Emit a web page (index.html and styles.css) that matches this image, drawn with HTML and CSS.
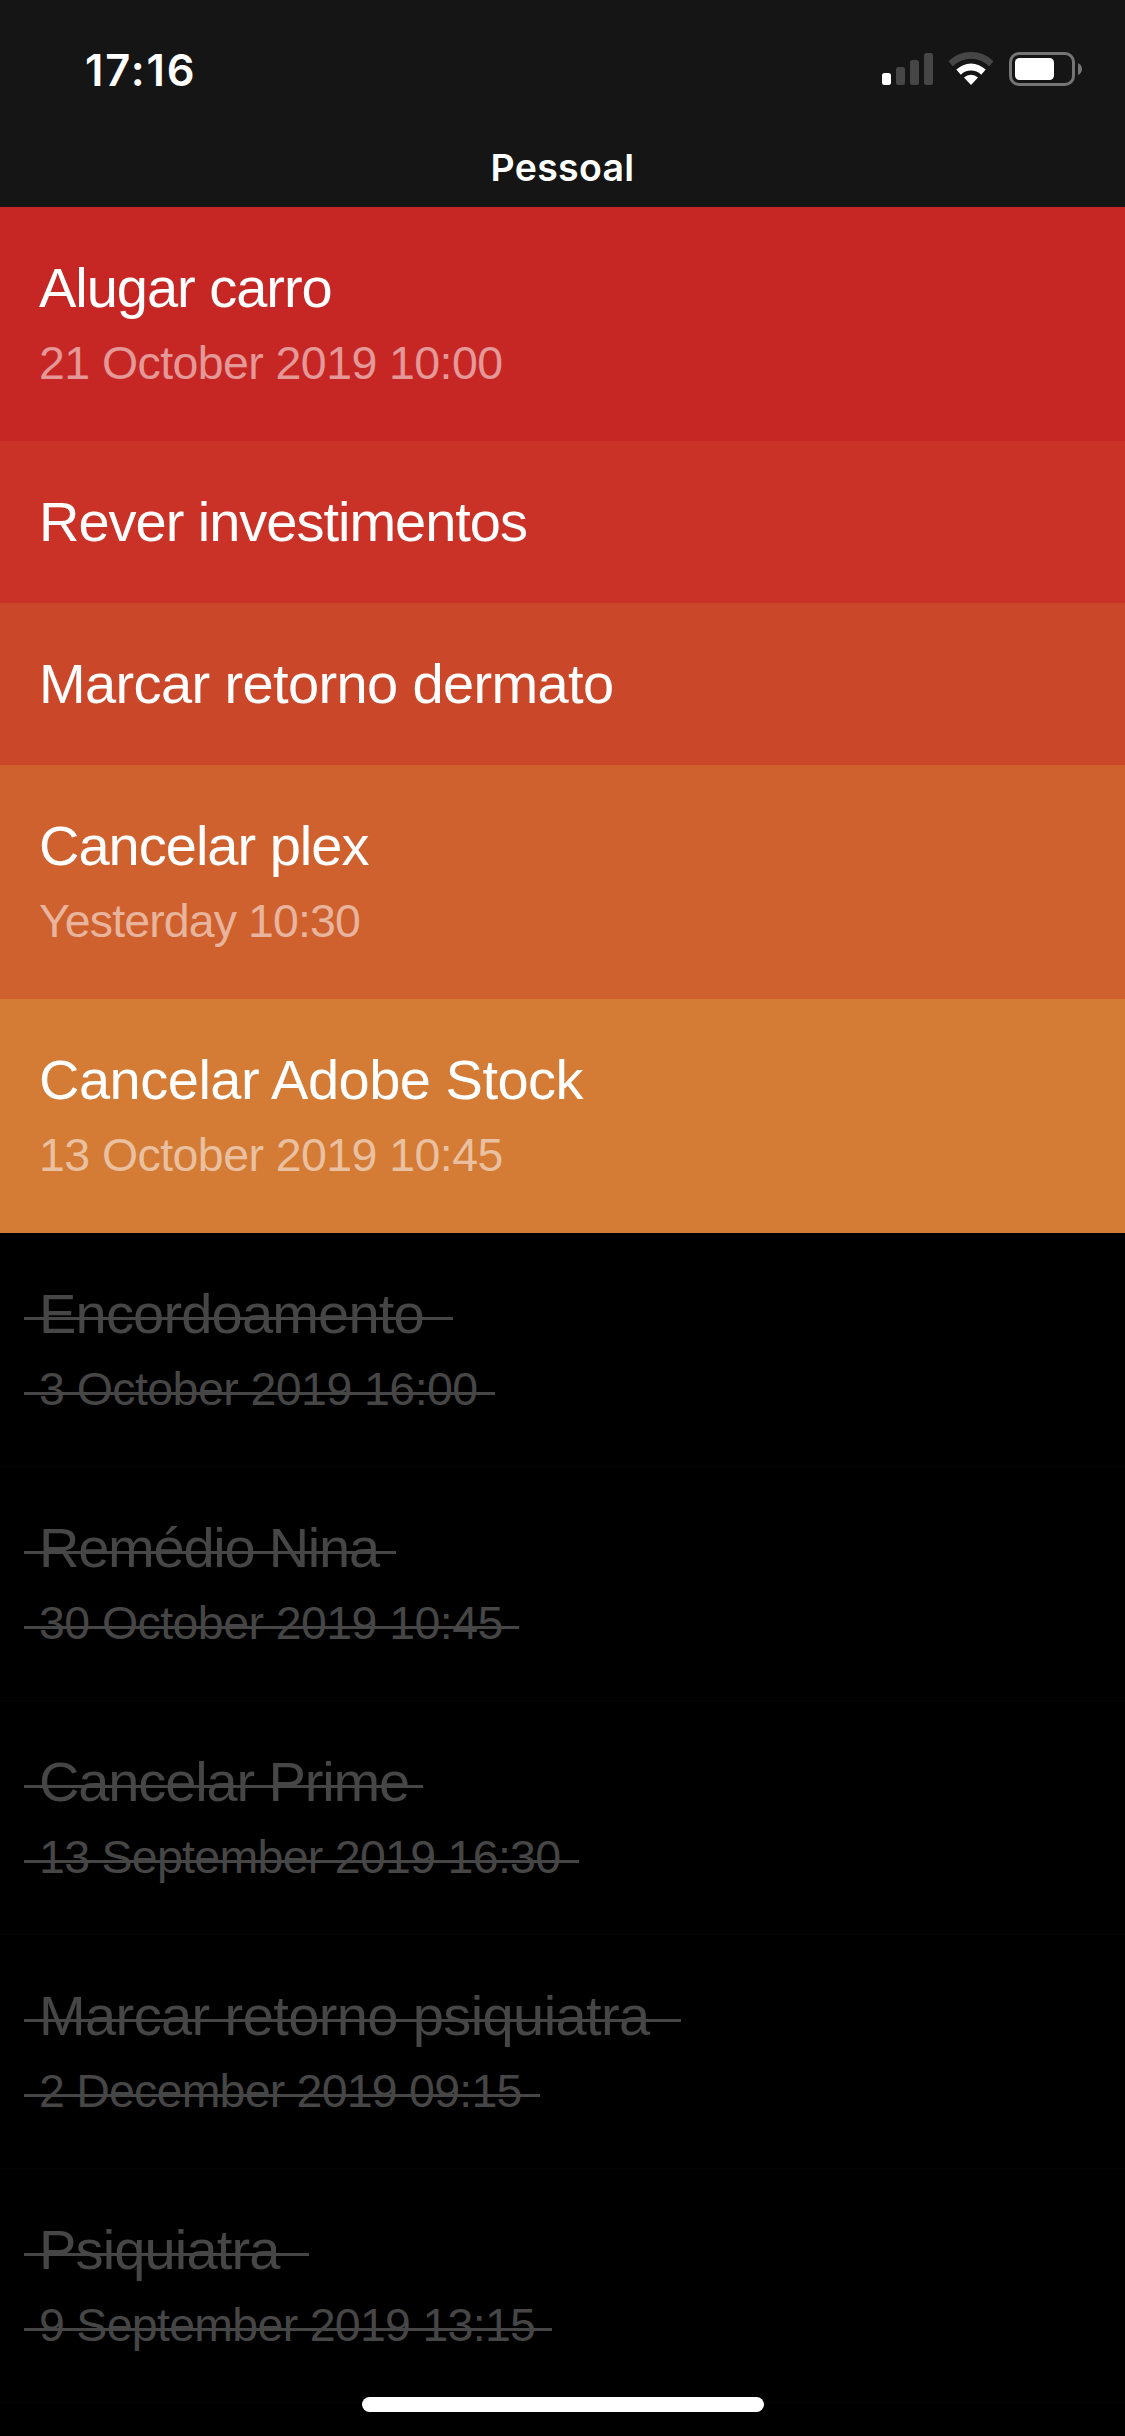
FILE: index.html
```
<!DOCTYPE html>
<html lang="pt">
<head>
<meta charset="utf-8">
<title>Pessoal</title>
<link rel="stylesheet" href="styles.css">
</head>
<body>
<div class="screen">
  <header class="header">
    <div class="status">
      <span class="time">17:16</span>
      <svg class="status-icons" width="210" height="40" viewBox="0 0 210 40" aria-hidden="true">
        <rect x="2" y="23" width="9" height="12" rx="2.5" fill="#fff"/>
        <g fill="#464646">
          <rect x="16" y="17" width="9" height="18" rx="2.5"/>
          <rect x="30" y="10" width="9" height="25" rx="2.5"/>
          <rect x="44" y="3" width="9" height="32" rx="2.5"/>
        </g>
        <path d="M68.500 11.200A32 32 0 0 1 113.500 11.200L109.200 16.300A25.500 25.500 0 0 0 72.800 16.300Z" fill="#464646"/>
        <path d="M76.300 19.600A21 21 0 0 1 105.700 19.600L101.200 24.700A14.500 14.500 0 0 0 80.800 24.700Z" fill="#fff"/>
        <path d="M84 27.600A10 10 0 0 1 98 27.600L91 35Z" fill="#fff"/>
        <rect x="130.500" y="3.500" width="63" height="31" rx="8.500" fill="none" stroke="#757575" stroke-width="3"/>
        <rect x="135" y="8" width="39" height="22" rx="4.500" fill="#fff"/>
        <path d="M198 13Q202 15 202 19T198 25Z" fill="#757575"/>
      </svg>
    </div>
    <h1 class="title">Pessoal</h1>
  </header>
  <ul class="list">
    <li class="item"><span class="name">Alugar carro</span><span class="date">21 October 2019 10:00</span></li>
    <li class="item short"><span class="name">Rever investimentos</span></li>
    <li class="item short"><span class="name">Marcar retorno dermato</span></li>
    <li class="item"><span class="name">Cancelar plex</span><span class="date">Yesterday 10:30</span></li>
    <li class="item"><span class="name">Cancelar Adobe Stock</span><span class="date">13 October 2019 10:45</span></li>
    <li class="item done"><span class="name">Encordoamento</span><span class="date">3 October 2019 16:00</span></li>
    <li class="item done"><span class="name">Remédio Nina</span><span class="date">30 October 2019 10:45</span></li>
    <li class="item done"><span class="name">Cancelar Prime</span><span class="date">13 September 2019 16:30</span></li>
    <li class="item done"><span class="name">Marcar retorno psiquiatra</span><span class="date">2 December 2019 09:15</span></li>
    <li class="item done"><span class="name">Psiquiatra</span><span class="date">9 September 2019 13:15</span></li>
  </ul>
  <div class="home-indicator"></div>
</div>
</body>
</html>
```
FILE: styles.css
```
* { box-sizing: border-box; }
body { margin: 0; background: #000; }

.screen {
  position: relative;
  width: 1125px;
  height: 2436px;
  overflow: hidden;
  background: #000;
  color: #fff;
  font-family: "Liberation Sans", Arial, sans-serif;
}

.header {
  height: 207px;
  background: #151515;
  font-family: Inter, sans-serif;
}
.status {
  display: flex;
  justify-content: space-between;
  height: 138px;
  padding: 50px 35px 0 85px;
}
.time {
  font-size: 43.500px;
  line-height: 40px;
  font-weight: 600;
  letter-spacing: 1.900px;
}
.title {
  margin: 0;
  font-size: 37.500px;
  line-height: 60px;
  font-weight: 600;
  letter-spacing: .3px;
  text-align: center;
}

.list { margin: 0; padding: 0; list-style: none; }
.item {
  display: flex;
  flex-direction: column;
  align-items: flex-start;
  height: 234px;
  padding: 49px 39px 0;
}
.item.short { height: 162px; }
.name, .date { position: relative; white-space: nowrap; }
.name {
  font-size: 56px;
  line-height: 64px;
  letter-spacing: var(--name-track);
}
.date {
  margin-top: 15px;
  font-size: 46.500px;
  line-height: 56px;
  letter-spacing: var(--date-track);
  color: rgba(255, 255, 255, .53);
}

.done { color: #464646; border-bottom: 1px solid #050505; }
.done .date { color: inherit; }
.done .name::after,
.done .date::after {
  content: "";
  position: absolute;
  left: -15px;
  height: 3px;
  background: #464646;
}
.done .name::after { top: 35px; width: var(--name-strike); }
.done .date::after { top: 31px; width: var(--date-strike); }

.item:nth-child(1) { background: #c62725; --name-track: -1.03px; --date-track: -.58px; }
.item:nth-child(2) { background: #ca3227; --name-track: -1.02px; }
.item:nth-child(3) { background: #ca4829; --name-track: -.62px; }
.item:nth-child(4) { background: #cf612e; --name-track: -1px; --date-track: -.9px; }
.item:nth-child(5) { background: #d47b35; --name-track: -.5px; --date-track: -.57px; }
.item:nth-child(6) { --name-track: -.81px; --date-track: -.56px; --name-strike: 429px; --date-strike: 471px; }
.item:nth-child(7) { --name-track: -1.25px; --date-track: -.57px; --name-strike: 372px; --date-strike: 495px; }
.item:nth-child(8) { --name-track: -1.13px; --date-track: -.71px; --name-strike: 399px; --date-strike: 555px; }
.item:nth-child(9) { --name-track: -.6px; --date-track: -.78px; --name-strike: 657px; --date-strike: 516px; }
.item:nth-child(10) { --name-track: -.85px; --date-track: -.71px; --name-strike: 285px; --date-strike: 528px; }

.home-indicator {
  position: absolute;
  left: 362px;
  top: 2397px;
  width: 402px;
  height: 15px;
  border-radius: 7.500px;
  background: #fff;
}
```
